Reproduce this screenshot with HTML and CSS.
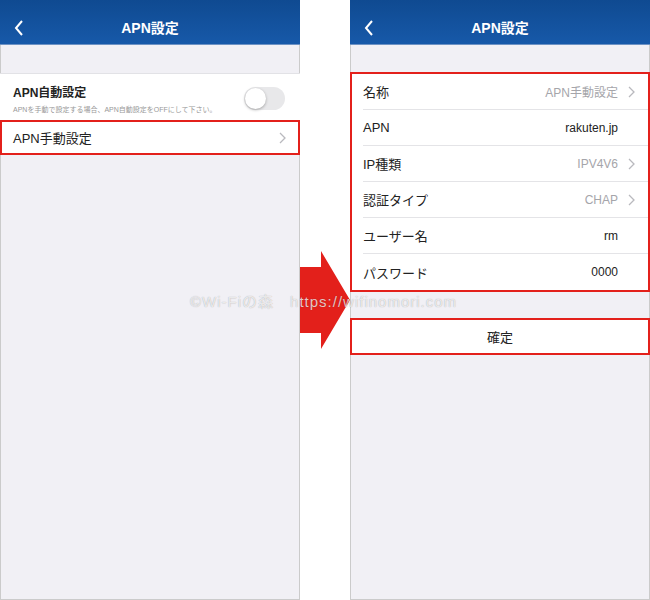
FILE: index.html
```html
<!DOCTYPE html>
<html lang="ja">
<head>
  <meta charset="UTF-8">
  <title>APN設定</title>
  <link rel="stylesheet" href="styles.css">
</head>
<body>
  <div class="page">
    <div class="phone">
      <div class="nav">
        <svg class="back" width="10" height="16" viewBox="0 0 10 16"><path d="M8 1 L2 8 L8 15" fill="none" stroke="#fff" stroke-width="2"/></svg>
        <div class="nav-title">APN設定</div>
      </div>
      <div class="list">
        <div class="row auto">
          <div>
            <div class="auto-title">APN自動設定</div>
            <div class="auto-note">APNを手動で設定する場合、APN自動設定をOFFにして下さい。</div>
          </div>
          <span class="toggle"><span class="knob"></span></span>
        </div>
        <div class="row marked">
          <span class="label">APN手動設定</span>
          <svg class="chev" width="7" height="12" viewBox="0 0 7 12"><path d="M1 1 L6 6 L1 11" fill="none" stroke="#b9b9be" stroke-width="1.3"/></svg>
        </div>
      </div>
    </div>

    <div class="arrow">
      <svg width="50" height="100" viewBox="0 0 50 100"><path d="M0 16 H21 V0 L50 49 L21 98 V82 H0 Z" fill="#e3201b"/></svg>
    </div>

    <div class="phone">
      <div class="nav">
        <svg class="back" width="10" height="16" viewBox="0 0 10 16"><path d="M8 1 L2 8 L8 15" fill="none" stroke="#fff" stroke-width="2"/></svg>
        <div class="nav-title">APN設定</div>
      </div>
      <div class="list boxed">
        <div class="field"><span class="label">名称</span><span class="value muted">APN手動設定</span><svg class="chev" width="7" height="12" viewBox="0 0 7 12"><path d="M1 1 L6 6 L1 11" fill="none" stroke="#b9b9be" stroke-width="1.3"/></svg></div>
        <div class="field"><span class="label">APN</span><span class="value">rakuten.jp</span><span class="chev-space"></span></div>
        <div class="field"><span class="label">IP種類</span><span class="value muted">IPV4V6</span><svg class="chev" width="7" height="12" viewBox="0 0 7 12"><path d="M1 1 L6 6 L1 11" fill="none" stroke="#b9b9be" stroke-width="1.3"/></svg></div>
        <div class="field"><span class="label">認証タイプ</span><span class="value muted">CHAP</span><svg class="chev" width="7" height="12" viewBox="0 0 7 12"><path d="M1 1 L6 6 L1 11" fill="none" stroke="#b9b9be" stroke-width="1.3"/></svg></div>
        <div class="field"><span class="label">ユーザー名</span><span class="value">rm</span><span class="chev-space"></span></div>
        <div class="field last"><span class="label">パスワード</span><span class="value">0000</span><span class="chev-space"></span></div>
      </div>
      <div class="confirm">確定</div>
    </div>

    <div class="watermark">©Wi-Fiの森　https://wifinomori.com</div>
  </div>
</body>
</html>
```

FILE: styles.css
```css
body { margin: 0; font-family: "Liberation Sans", "Noto Sans CJK JP", sans-serif; background: #fff; }
.page { position: relative; display: flex; width: 650px; height: 600px; }

.phone {
  width: 300px;
  height: 600px;
  box-sizing: border-box;
  border: 1px solid #cbcbcb;
  background: #f1f0f5;
}
.nav {
  height: 45px;
  display: flex;
  align-items: center;
  justify-content: center;
  position: relative;
  padding-top: 9px;
  background: linear-gradient(#0f4a91, #1759a9);
  border-bottom: 1px solid #6d92c4;
  box-sizing: border-box;
  margin: -1px -1px 0;
}
.back { position: absolute; left: 14px; top: 20px; }
.nav-title { color: #fff; font-size: 14px; font-weight: bold; }

.list { background: #fff; margin: 28px -1px 0; }
.row {
  display: flex;
  align-items: center;
  justify-content: space-between;
  padding: 0 14px 0 13px;
  box-sizing: border-box;
}
.auto { height: 47px; border-top: 1px solid #e2e2e6; padding-top: 3px; }
.auto-title { font-size: 12px; font-weight: bold; color: #222; }
.auto-note { font-size: 7px; color: #999; margin-top: 4px; }
.toggle {
  width: 41px;
  height: 23px;
  border-radius: 12px;
  background: #e8e8ea;
  display: flex;
  align-items: center;
  padding: 1px;
  box-sizing: border-box;
  margin-right: 1px;
}
.knob {
  width: 21px;
  height: 21px;
  border-radius: 50%;
  background: #fff;
  box-shadow: 0 1px 3px rgba(0, 0, 0, 0.3);
}
.marked { height: 35px; border: 2px solid #e3201b; padding-left: 11px; padding-right: 12px; }
.label { font-size: 13px; color: #222; }
.chev { display: block; }

.boxed { margin-top: 27px; border: 2px solid #e3201b; }
.field {
  height: 36px;
  display: flex;
  align-items: center;
  margin-left: 11px;
  padding-right: 13px;
  border-bottom: 1px solid #e4e4e7;
  box-sizing: border-box;
}
.field.last { border-bottom: none; }
.field .label { flex: 1; }
.value { font-size: 12px; color: #222; margin-right: 10px; }
.value.muted { color: #a5a5aa; }
.chev-space { width: 7px; }

.confirm {
  margin: 26px -1px 0;
  height: 37px;
  border: 2px solid #e3201b;
  background: #fff;
  display: flex;
  align-items: center;
  justify-content: center;
  font-size: 13px;
  color: #222;
  box-sizing: border-box;
}

.arrow { width: 50px; padding-top: 251px; }
.arrow svg { display: block; }

.watermark {
  position: absolute;
  left: 190px;
  top: 290px;
  font-size: 15px;
  letter-spacing: 1px;
  color: rgba(255, 255, 255, 0.75);
  text-shadow: 0 0 1px rgba(0, 0, 0, 0.35);
}
```
